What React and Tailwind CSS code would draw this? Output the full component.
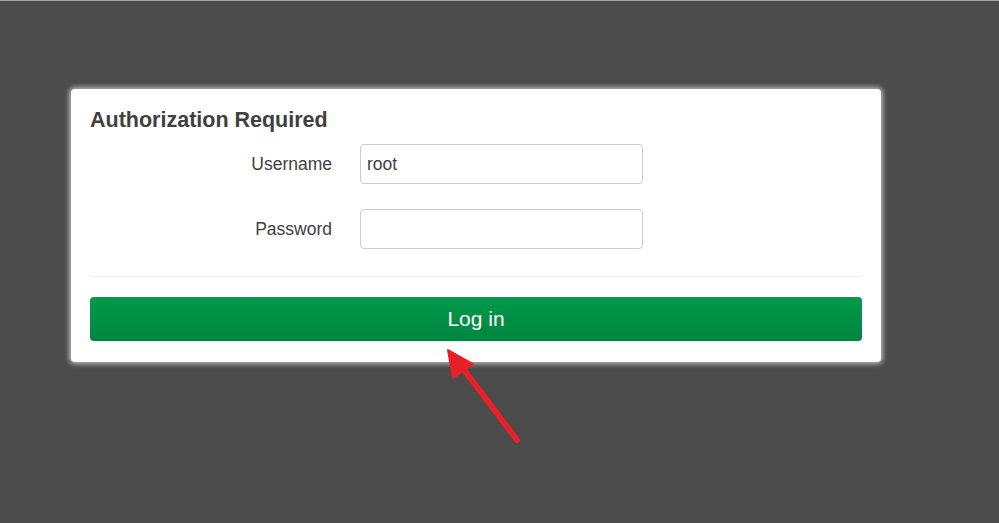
import React from "react";

const Field = ({ label, type, value }) => (
  <div className="flex items-center">
    <label className="w-[242px] pr-0 text-right text-[17.5px] text-[#404040]">{label}</label>
    <input
      type={type}
      defaultValue={value}
      className="ml-[28px] h-[40px] w-[283px] rounded-[4px] border border-[#cccccc] bg-white px-[6px] text-[17.5px] text-[#404040] outline-none"
    />
  </div>
);

const Arrow = () => (
  <svg className="absolute left-0 top-0" width="999" height="523" viewBox="0 0 999 523">
    <line x1="517" y1="439" x2="462" y2="366" stroke="#e8202a" strokeWidth="6" strokeLinecap="round" />
    <polygon points="448,349 453,377 473,363" fill="#e8202a" stroke="#e8202a" strokeWidth="2" strokeLinejoin="round" />
  </svg>
);

export default function App() {
  return (
    <div className="relative h-[523px] w-[999px] overflow-hidden border-t border-[#a8a8a8] bg-[#4b4b4b] font-['Liberation_Sans',Arial,sans-serif]">
      <div className="ml-[71px] mt-[88px] w-[810px] rounded-[4px] bg-white px-[19px] pb-[21px] pt-[16px] shadow-[0_0_5px_2px_rgba(255,255,255,0.6)]">
        <h2 className="text-[21.5px] font-bold leading-[30px] text-[#404040]">Authorization Required</h2>
        <div className="mt-[9px] flex flex-col gap-[25px]">
          <Field label="Username" type="text" value="root" />
          <Field label="Password" type="password" value="" />
        </div>
        <div className="mt-[27px] border-t border-[#eeeeee]" />
        <button className="mt-[20px] flex h-[44px] w-full items-center justify-center rounded-[4px] bg-gradient-to-b from-[#009a4c] to-[#00843e] text-[21px] text-white">
          Log in
        </button>
      </div>
      <Arrow />
    </div>
  );
}
